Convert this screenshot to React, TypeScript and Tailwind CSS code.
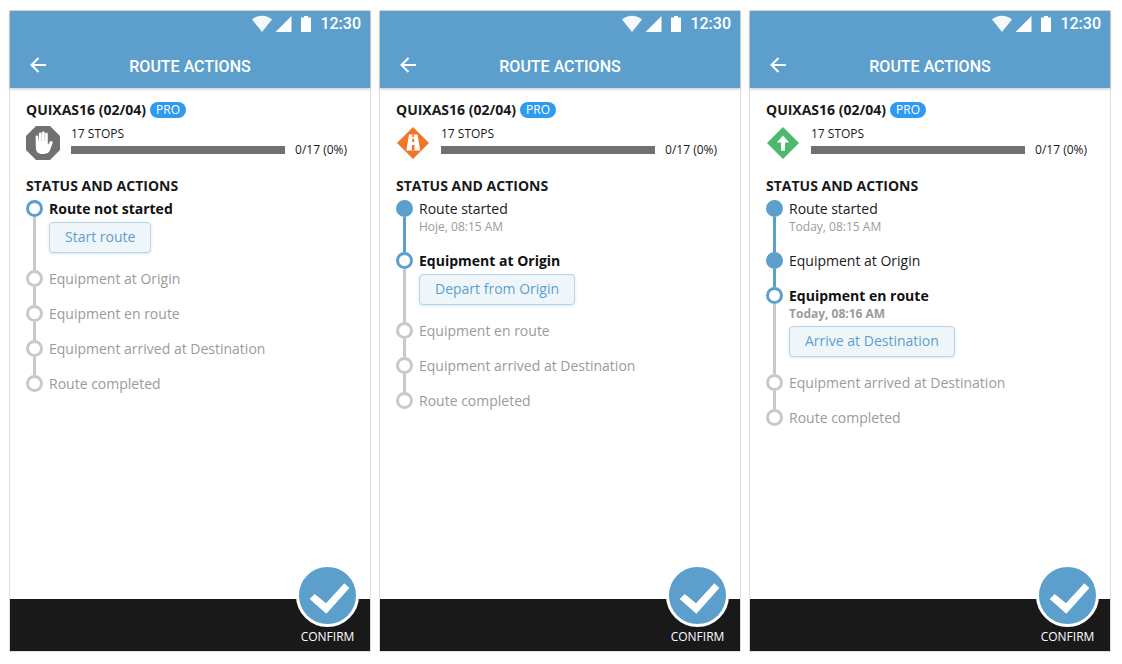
import type { ReactNode } from "react";

type Step = {
  label: string;
  state: "done" | "current" | "pending";
  time?: string;
  action?: string;
};

type Screen = { id: string; icon: ReactNode; steps: Step[] };

function StopIcon() {
  return (
    <svg viewBox="0 0 34 34" className="size-[34px] shrink-0" aria-hidden="true">
      <path d="M10 0h14l10 10v14L24 34H10L0 24V10z" fill="#717171" />
      <path
        d="M9.600 10.800c0-1.800 2.500-1.800 2.700 0l.3 4.600h.3V7.800c0-1.900 2.800-1.900 2.800 0v7.200h.3V6.800c0-1.800 2.800-1.800 2.800 0V15h.3V8.200c0-1.800 2.700-1.800 2.700 0v10.200l.5.100 1.300-2.500c1-1.900 3.600-1 3 1l-2.300 6.600c-.8 2.700-2.800 4.400-6.300 4.400h-1.800c-4 0-6.300-2.300-6.300-6z"
        fill="#fff"
      />
    </svg>
  );
}

function RoadIcon() {
  return (
    <svg viewBox="0 0 34 34" className="size-[34px] shrink-0" aria-hidden="true">
      <path d="M17 1l16 16-16 16L1 17z" fill="#f1762a" />
      <path d="M13 8.500h8.500L24.200 24.500H10.400z" fill="#fff" />
      <path d="M16.300 8.500h1.800v2.500h-1.800zM16.200 12.500h2v3.500h-2zM15.900 19h2.600v5.500h-2.600z" fill="#f1762a" />
    </svg>
  );
}

function EnRouteIcon() {
  return (
    <svg viewBox="0 0 34 34" className="size-[34px] shrink-0" aria-hidden="true">
      <path d="M17 1l16 16-16 16L1 17z" fill="#4cb96c" />
      <path d="M17 9.500l6.200 7H19v8.300h-4v-8.300h-4.200z" fill="#fff" />
    </svg>
  );
}

const screens: Screen[] = [
  {
    id: "not-started",
    icon: <StopIcon />,
    steps: [
      { label: "Route not started", state: "current", action: "Start route" },
      { label: "Equipment at Origin", state: "pending" },
      { label: "Equipment en route", state: "pending" },
      { label: "Equipment arrived at Destination", state: "pending" },
      { label: "Route completed", state: "pending" },
    ],
  },
  {
    id: "at-origin",
    icon: <RoadIcon />,
    steps: [
      { label: "Route started", state: "done", time: "Hoje, 08:15 AM" },
      { label: "Equipment at Origin", state: "current", action: "Depart from Origin" },
      { label: "Equipment en route", state: "pending" },
      { label: "Equipment arrived at Destination", state: "pending" },
      { label: "Route completed", state: "pending" },
    ],
  },
  {
    id: "en-route",
    icon: <EnRouteIcon />,
    steps: [
      { label: "Route started", state: "done", time: "Today, 08:15 AM" },
      { label: "Equipment at Origin", state: "done" },
      {
        label: "Equipment en route",
        state: "current",
        time: "Today, 08:16 AM",
        action: "Arrive at Destination",
      },
      { label: "Equipment arrived at Destination", state: "pending" },
      { label: "Route completed", state: "pending" },
    ],
  },
];

const nodeStyles = {
  done: "border-[#5d9fcc] bg-[#5d9fcc]",
  current: "border-[#5d9fcc] bg-white",
  pending: "border-[#c9c9c9] bg-white",
};

const labelStyles = {
  done: "text-[#1a1a1a]",
  current: "font-bold text-[#111111]",
  pending: "text-[#9b9b9b]",
};

function Header() {
  return (
    <header className="z-10 bg-[#5d9fcc] font-['Roboto',sans-serif] font-medium text-white shadow-[0_1px_3px_rgba(0,0,0,0.25)]">
      <div className="flex h-[31px] items-center justify-end gap-2 pr-[9px] pb-[6px]">
        <svg viewBox="0 0 60 18" className="h-[18px] w-[60px]" aria-hidden="true">
          <path d="M0 4.400C6-.5 14-.5 20 4.400L10 17z" fill="#fff" fillOpacity=".92" />
          <path d="M39.500 1v16H23.500z" fill="#fff" />
          <path d="M52 1h4v1.500h3V17H49V2.500h3z" fill="#fff" />
        </svg>
        <span className="text-base leading-5">12:30</span>
      </div>
      <div className="grid h-[46px] grid-cols-[48px_1fr_48px] items-center">
        <button type="button" aria-label="Back" className="flex items-center justify-center pl-2">
          <svg viewBox="0 0 16 16" className="size-4" aria-hidden="true">
            <path d="M8.500 1l-7 7 7 7M1.500 8H16" fill="none" stroke="#fff" strokeWidth="2" />
          </svg>
        </button>
        <h1 className="pt-[3px] text-center text-base leading-5">ROUTE ACTIONS</h1>
      </div>
    </header>
  );
}

function TimelineStep({ step, last, nextPending }: { step: Step; last: boolean; nextPending: boolean }) {
  return (
    <li className="flex gap-[6px]">
      <div className="flex w-[17px] flex-col items-center">
        <span className={`size-[17px] shrink-0 rounded-full border-3 ${nodeStyles[step.state]}`} />
        {!last && <span className={`w-[3px] flex-1 ${nextPending ? "bg-[#c9c9c9]" : "bg-[#5d9fcc]"}`} />}
      </div>
      <div className={`pb-[17px] ${labelStyles[step.state]}`}>
        <p className="text-sm leading-[18px]">{step.label}</p>
        {step.time && <p className="text-xs leading-[17px] text-[#9b9b9b]">{step.time}</p>}
        {step.action && (
          <button
            type="button"
            className="mt-1 block h-[31px] rounded-[4px] border border-[#b9d5e8] bg-[#eff6fa] px-[15px] pb-[2px] text-sm font-normal text-[#5d9fcc] shadow-[0_1px_3px_rgba(93,159,204,0.25)]"
          >
            {step.action}
          </button>
        )}
      </div>
    </li>
  );
}

function Phone({ screen }: { screen: Screen }) {
  return (
    <section className="flex min-w-0 flex-1 flex-col border border-[#dedede] bg-white">
      <Header />
      <main className="flex-1 px-4 pt-[13px]">
        <div className="flex items-center gap-1">
          <h2 className="text-sm leading-[18px] font-bold">QUIXAS16 (02/04)</h2>
          <span className="rounded-full bg-[#2f9bf0] px-[6px] text-xs leading-4 text-white">PRO</span>
        </div>
        <div className="mt-[7px] flex gap-[11px]">
          {screen.icon}
          <div className="flex-1 pr-[7px] text-xs leading-4">
            <p id={`stops-${screen.id}`}>17 STOPS</p>
            <div className="flex items-center gap-[10px]">
              <div
                role="progressbar"
                aria-labelledby={`stops-${screen.id}`}
                aria-valuenow={0}
                aria-valuemin={0}
                aria-valuemax={17}
                className="h-2 flex-1 bg-[#717171]"
              />
              <span>0/17 (0%)</span>
            </div>
          </div>
        </div>
        <h3 className="mt-[17px] text-sm leading-[18px] font-bold">STATUS AND ACTIONS</h3>
        <ol className="mt-[5px]">
          {screen.steps.map((step, i) => (
            <TimelineStep
              key={step.label}
              step={step}
              last={i === screen.steps.length - 1}
              nextPending={screen.steps[i + 1]?.state === "pending"}
            />
          ))}
        </ol>
      </main>
      <footer className="flex justify-end bg-[#191919] pr-[11px]">
        <button
          type="button"
          className="-mt-[35px] flex flex-col items-center gap-[2px] pb-[6px] text-xs leading-4 text-white"
        >
          <span className="rounded-full border-3 border-white bg-[#5d9fcc]">
            <svg viewBox="0 0 171 171" className="size-[57px]" aria-hidden="true">
              <path d="M32 96l15-15 34 28 55-60 15 14-69 77z" fill="#fff" />
            </svg>
          </span>
          CONFIRM
        </button>
      </footer>
    </section>
  );
}

export default function App() {
  return (
    <div className="flex min-h-screen gap-2 bg-white pt-[10px] pr-[11px] pb-3 pl-[9px] font-['Open_Sans',sans-serif] text-[#1a1a1a]">
      {screens.map((screen) => (
        <Phone key={screen.id} screen={screen} />
      ))}
    </div>
  );
}
